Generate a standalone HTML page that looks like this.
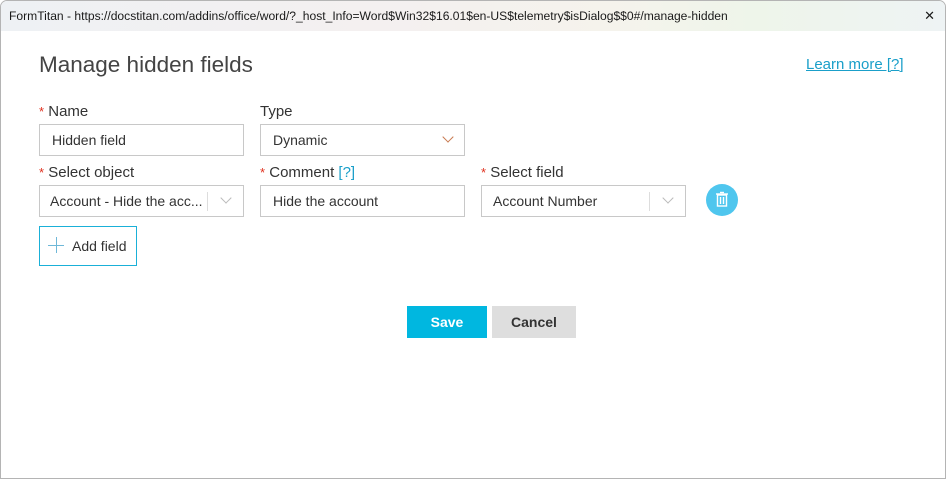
<!DOCTYPE html>
<html><head><style>
body{margin:0;width:946px;height:479px;overflow:hidden;font-family:"Segoe UI","Liberation Sans",sans-serif;background:#fff;position:relative}
.win{position:absolute;left:0;top:0;width:944px;height:477px;border:1px solid #b4b4b4;border-radius:7px 7px 0 0;overflow:hidden}
.tb{position:absolute;left:0;top:0;width:944px;height:30px;background:linear-gradient(90deg,#eef1f4 0%,#f4f0f0 40%,#f5f3ec 65%,#eef5ea 80%,#eef3f4 100%);font-size:12.1px;color:#1a1a1a;line-height:30px;padding-left:8px;box-sizing:border-box}
.x{position:absolute;right:10px;top:0;font-size:13px}
.abs{position:absolute}
h1{position:absolute;left:38px;top:51px;margin:0;font-weight:normal;font-size:22.5px;color:#444;font-family:"Liberation Sans",sans-serif}
.lbl{position:absolute;font-size:15px;color:#333}
.req{color:#e0301e;font-size:13px}
.in{position:absolute;height:32px;border:1px solid #c8c8c8;box-sizing:border-box;font-size:14px;color:#333;line-height:30px;padding-left:12px}
.sep{position:absolute;top:6px;width:1px;height:19px;background:#ddd}
.chev{position:absolute;top:8px;width:7px;height:7px;border-right:1.2px solid #bbb;border-bottom:1.2px solid #bbb;transform:rotate(45deg)}
.link{color:#1a9fc9}
</style></head><body>
<div class="win">
<div class="tb">FormTitan - https://docstitan.com/addins/office/word/?_host_Info=Word$Win32$16.01$en-US$telemetry$isDialog$$0#/manage-hidden<span class="x">✕</span></div>
<h1>Manage hidden fields</h1>
<div class="abs link" style="left:805px;top:55px;font-size:15px;text-decoration:underline">Learn more [?]</div>

<div class="lbl" style="left:38px;top:102px"><span class="req">*</span> Name</div>
<div class="lbl" style="left:259px;top:102px">Type</div>
<div class="in" style="left:38px;top:123px;width:205px">Hidden field</div>
<div class="in" style="left:259px;top:123px;width:205px">Dynamic<div class="chev" style="right:12px;border-color:#c87a50"></div></div>

<div class="lbl" style="left:38px;top:163px"><span class="req">*</span> Select object</div>
<div class="lbl" style="left:259px;top:163px"><span class="req">*</span> Comment <span class="link">[?]</span></div>
<div class="lbl" style="left:480px;top:163px"><span class="req">*</span> Select field</div>
<div class="in" style="left:38px;top:184px;width:205px;padding-left:10px">Account - Hide the acc...<div class="sep" style="left:167px"></div><div class="chev" style="left:182px"></div></div>
<div class="in" style="left:259px;top:184px;width:205px">Hide the account</div>
<div class="in" style="left:480px;top:184px;width:205px;padding-left:11px">Account Number<div class="sep" style="left:167px"></div><div class="chev" style="left:182px"></div></div>

<div class="abs" style="left:705px;top:183px;width:32px;height:32px;border-radius:50%;background:#4fc6ee">
<svg width="32" height="32" viewBox="0 0 32 32"><g fill="none" stroke="#fff" stroke-width="1.4"><rect x="11.5" y="11" width="9" height="11"/><line x1="10" y1="10" x2="22" y2="10"/><line x1="14" y1="8.5" x2="18" y2="8.5"/><line x1="14.5" y1="13" x2="14.5" y2="20"/><line x1="17.5" y1="13" x2="17.5" y2="20"/></g></svg></div>

<div class="abs" style="left:38px;top:225px;width:98px;height:40px;border:1px solid #1ab0d8;box-sizing:border-box;font-size:14px;color:#333;line-height:38px;padding-left:32px">Add field
<div class="abs" style="left:8px;top:18px;width:16px;height:1px;background:#6fb8d8"></div><div class="abs" style="left:16px;top:10px;width:1px;height:16px;background:#6fb8d8"></div></div>

<div class="abs" style="left:406px;top:305px;width:80px;height:32px;background:#00b7e0;color:#fff;font-weight:bold;font-size:14px;text-align:center;line-height:32px">Save</div>
<div class="abs" style="left:491px;top:305px;width:84px;height:32px;background:#dedede;color:#333;font-weight:bold;font-size:14px;text-align:center;line-height:32px">Cancel</div>
</div>
</body></html>
